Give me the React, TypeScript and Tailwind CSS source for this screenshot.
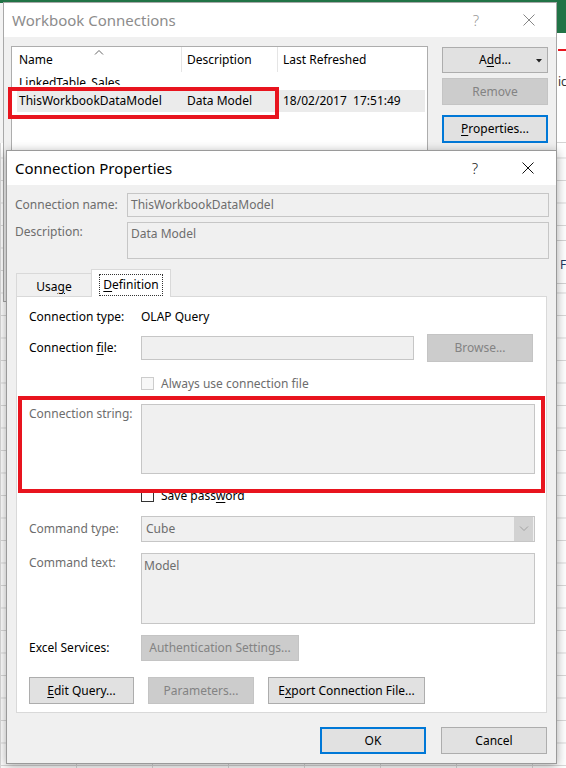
import React from "react";

const U = ({ children }: { children: React.ReactNode }) => (
  <span className="underline underline-offset-[2px]">{children}</span>
);

const CloseIcon = () => (
  <svg width="12" height="12" viewBox="0 0 12 12">
    <path d="M0.5 0.5 L11.5 11.5 M11.5 0.5 L0.5 11.5" stroke="#111" strokeWidth="1" />
  </svg>
);

type BtnProps = {
  children: React.ReactNode;
  className?: string;
  disabled?: boolean;
  focused?: boolean;
};

function Btn({ children, className = "", disabled = false, focused = false }: BtnProps) {
  const look = disabled
    ? "bg-[#cccccc] border border-[#c4c4c4] text-[#838383]"
    : focused
    ? "bg-[#e1e1e1] border-2 border-[#0078d7] text-black"
    : "bg-[#e1e1e1] border border-[#adadad] text-black";
  return (
    <div className={`flex items-center justify-center text-[12px] ${look} ${className}`}>
      {children}
    </div>
  );
}

function Check({ disabled = false }: { disabled?: boolean }) {
  return (
    <span
      className={`w-[13px] h-[13px] border shrink-0 ${
        disabled ? "border-[#cccccc] bg-[#f7f7f7]" : "border-[#333333] bg-white"
      }`}
    />
  );
}

const box = "border border-[#c6c6c6] bg-[#f0f0f0] text-[#6d6d6d] text-[12px]";

function WorkbookConnections() {
  return (
    <div className="absolute left-[3px] top-[2px] w-[554px] h-[300px] border border-[#a8a8a8] bg-[#f0f0f0]">
      <div className="h-[34px] bg-white flex items-center pl-[8px] pr-[21px]">
        <span className="text-[15px] text-[#8c8c8c]">Workbook Connections</span>
        <span className="ml-auto text-[15px] font-light text-[#999]">?</span>
        <span className="ml-[44px] opacity-50">
          <CloseIcon />
        </span>
      </div>
      <div className="flex pl-[7px] pt-[9px]">
        <div className="w-[417px] h-[116px] bg-white border border-[#adadad] text-[12px] text-black">
          <div className="relative flex h-[25px] items-center">
            <div className="w-[170px] pl-[7px] h-full flex items-center border-r border-[#e5e5e5] relative">
              Name
              <svg className="absolute left-[82px] top-[2px]" width="10" height="6" viewBox="0 0 10 6">
                <path d="M1 5.5 L5 1.5 L9 5.5" stroke="#666" fill="none" />
              </svg>
            </div>
            <div className="w-[96px] pl-[5px] h-full flex items-center border-r border-[#e5e5e5]">
              Description
            </div>
            <div className="pl-[5px]">Last Refreshed</div>
          </div>
          <div className="h-[13px] overflow-hidden pl-[7px] leading-[21px]">LinkedTable_Sales</div>
          <div className="mt-[5px] ml-[5px] mr-[2px] h-[22px] bg-[#ebebeb] flex items-center">
            <div className="w-[165px] pl-[2px]">ThisWorkbookDataModel</div>
            <div className="w-[96px] pl-[5px]">Data Model</div>
            <div className="pl-[5px] whitespace-pre">18/02/2017  17:51:49</div>
          </div>
        </div>
        <div className="ml-[14px] w-[106px] flex flex-col">
          <Btn className="relative h-[26px] mt-[1px]">
            A<U>d</U>d...
            <svg className="absolute right-[5px] top-[11px]" width="6" height="4" viewBox="0 0 6 4">
              <path d="M0 0 H6 L3 3.5 Z" fill="#222" />
            </svg>
          </Btn>
          <Btn disabled className="h-[27px] mt-[5px]">
            Remove
          </Btn>
          <Btn focused className="h-[28px] mt-[10px]">
            <U>P</U>roperties...
          </Btn>
        </div>
      </div>
      <div className="absolute left-[4px] top-[84px] w-[271px] h-[32px] border-4 border-[#e8141e]" />
    </div>
  );
}

function ConnectionProperties() {
  return (
    <div className="absolute left-[6px] top-[150px] w-[551px] h-[614px] border border-[#9a9a9a] bg-[#f0f0f0] shadow-[0_2px_10px_rgba(0,0,0,0.35)]">
      <div className="h-[34px] bg-white flex items-center pl-[8px] pr-[22px]">
        <span className="text-[15px] text-black">Connection Properties</span>
        <span className="ml-auto text-[15px] font-light text-[#222]">?</span>
        <span className="ml-[44px]">
          <CloseIcon />
        </span>
      </div>

      <div className="pl-[8px] pr-[7px] pt-[8px]">
        <div className="flex items-center h-[24px]">
          <div className="w-[112px] text-[12px] text-[#6d6d6d]">Connection name:</div>
          <div className={`${box} flex-1 h-full flex items-center pl-[3px]`}>ThisWorkbookDataModel</div>
        </div>
        <div className="flex mt-[5px] h-[37px]">
          <div className="w-[112px] text-[12px] text-[#6d6d6d] pt-[1px]">Description:</div>
          <div className={`${box} flex-1 h-full pl-[3px] pt-[2px]`}>Data Model</div>
        </div>
      </div>

      <div className="ml-[9px] mt-[10px] flex items-end h-[28px] text-[12px] text-black">
        <div className="w-[75px] h-[24px] border-t border-l border-[#d9d9d9] flex items-center justify-center pt-[3px]">
          Usa<U>g</U>e
        </div>
        <div className="relative z-10 w-[80px] h-[28px] bg-white border-t border-l border-r border-[#d9d9d9] flex items-center justify-center pt-[2px]">
          <span className="border border-dotted border-[#333] px-[3px] py-[1px]">
            <U>D</U>efinition
          </span>
        </div>
      </div>

      <div className="ml-[9px] -mt-px w-[531px] h-[417px] bg-white border border-[#d9d9d9] pl-[12px] pt-[11px] text-[12px] relative">
        <div className="flex items-center h-[18px]">
          <div className="w-[112px] text-black">Connection type:</div>
          <div className="text-black">OLAP Query</div>
        </div>

        <div className="flex items-center h-[28px] mt-[8px]">
          <div className="w-[112px] text-black">
            Connection <U>f</U>ile:
          </div>
          <div className={`${box} w-[273px] h-[24px]`} />
          <Btn disabled className="ml-[13px] w-[106px] h-[28px]">
            Browse...
          </Btn>
        </div>

        <div className="flex items-center h-[17px] mt-[13px] pl-[112px] gap-[7px]">
          <Check disabled />
          <span className="text-[#6d6d6d]">Always use connection file</span>
        </div>

        <div className="flex h-[70px] mt-[12px]">
          <div className="w-[112px] text-[#6d6d6d] pt-[1px]">Connection string:</div>
          <div className={`${box} w-[394px] h-full`} />
        </div>

        <div className="flex items-center h-[17px] mt-[13px] pl-[112px] gap-[7px]">
          <Check />
          <span className="text-black">
            Save pass<U>w</U>ord
          </span>
        </div>

        <div className="flex items-center h-[26px] mt-[12px]">
          <div className="w-[112px] text-[#6d6d6d]">Command type:</div>
          <div className={`${box} w-[394px] h-full flex items-center pl-[4px]`}>
            Cube
            <div className="ml-auto mr-px w-[19px] h-[24px] bg-[#d2d2d2] flex items-center justify-center">
              <svg width="10" height="6" viewBox="0 0 10 6">
                <path d="M1 0.5 L5 4.5 L9 0.5" stroke="#a0a0a0" fill="none" />
              </svg>
            </div>
          </div>
        </div>

        <div className="flex h-[71px] mt-[11px]">
          <div className="w-[112px] text-[#6d6d6d] pt-[1px]">Command text:</div>
          <div className={`${box} w-[394px] h-full pl-[2px] pt-[3px]`}>Model</div>
        </div>

        <div className="flex items-center h-[26px] mt-[11px]">
          <div className="w-[112px] text-black">Excel Services:</div>
          <Btn disabled className="w-[158px] h-[26px]">
            Authentication Settings...
          </Btn>
        </div>

        <div className="flex items-center h-[27px] mt-[16px] gap-[14px]">
          <Btn className="w-[105px] h-[27px]">
            <U>E</U>dit Query...
          </Btn>
          <Btn disabled className="w-[106px] h-[27px]">
            Parameters...
          </Btn>
          <Btn className="w-[157px] h-[27px]">
            E<U>x</U>port Connection File...
          </Btn>
        </div>

        <div className="absolute left-[1px] top-[99px] w-[527px] h-[97px] border-4 border-[#e8141e]" />
      </div>

      <div className="flex justify-end gap-[15px] mt-[14px] pr-[9px]">
        <Btn focused className="w-[106px] h-[27px]">
          OK
        </Btn>
        <Btn className="w-[106px] h-[27px]">Cancel</Btn>
      </div>
    </div>
  );
}

export default function App() {
  return (
    <div className="relative w-[566px] h-[768px] overflow-hidden font-['Segoe_UI','Noto_Sans',sans-serif] bg-white bg-[linear-gradient(#d9d9d9_1px,transparent_1px),linear-gradient(90deg,#d9d9d9_1px,transparent_1px)] bg-size-[76px_22.5px]">
      <div className="absolute left-0 top-0 w-full h-[3px] bg-[#217346]" />
      <div className="absolute left-0 top-[3px] w-[4px] h-[140px] bg-[#f3f3f3]" />
      <div className="absolute left-[548px] top-0 w-[18px] h-[33px] bg-[#217346]" />
      <div className="absolute left-[548px] top-[33px] w-[18px] h-[110px] bg-white border-b border-[#d4d4d4]" />
      <div className="absolute left-[558px] top-[49px] w-[8px] h-[2px] bg-[#e8141e]" />
      <div className="absolute left-[558px] top-[73px] text-[12px] text-[#333]">ic</div>
      <div className="absolute left-[548px] top-[240px] w-[18px] h-[44px] bg-white border-y border-[#d4d4d4]" />
      <div className="absolute left-[560px] top-[256px] text-[12px] text-[#1f3a60]">F</div>
      <WorkbookConnections />
      <ConnectionProperties />
    </div>
  );
}
